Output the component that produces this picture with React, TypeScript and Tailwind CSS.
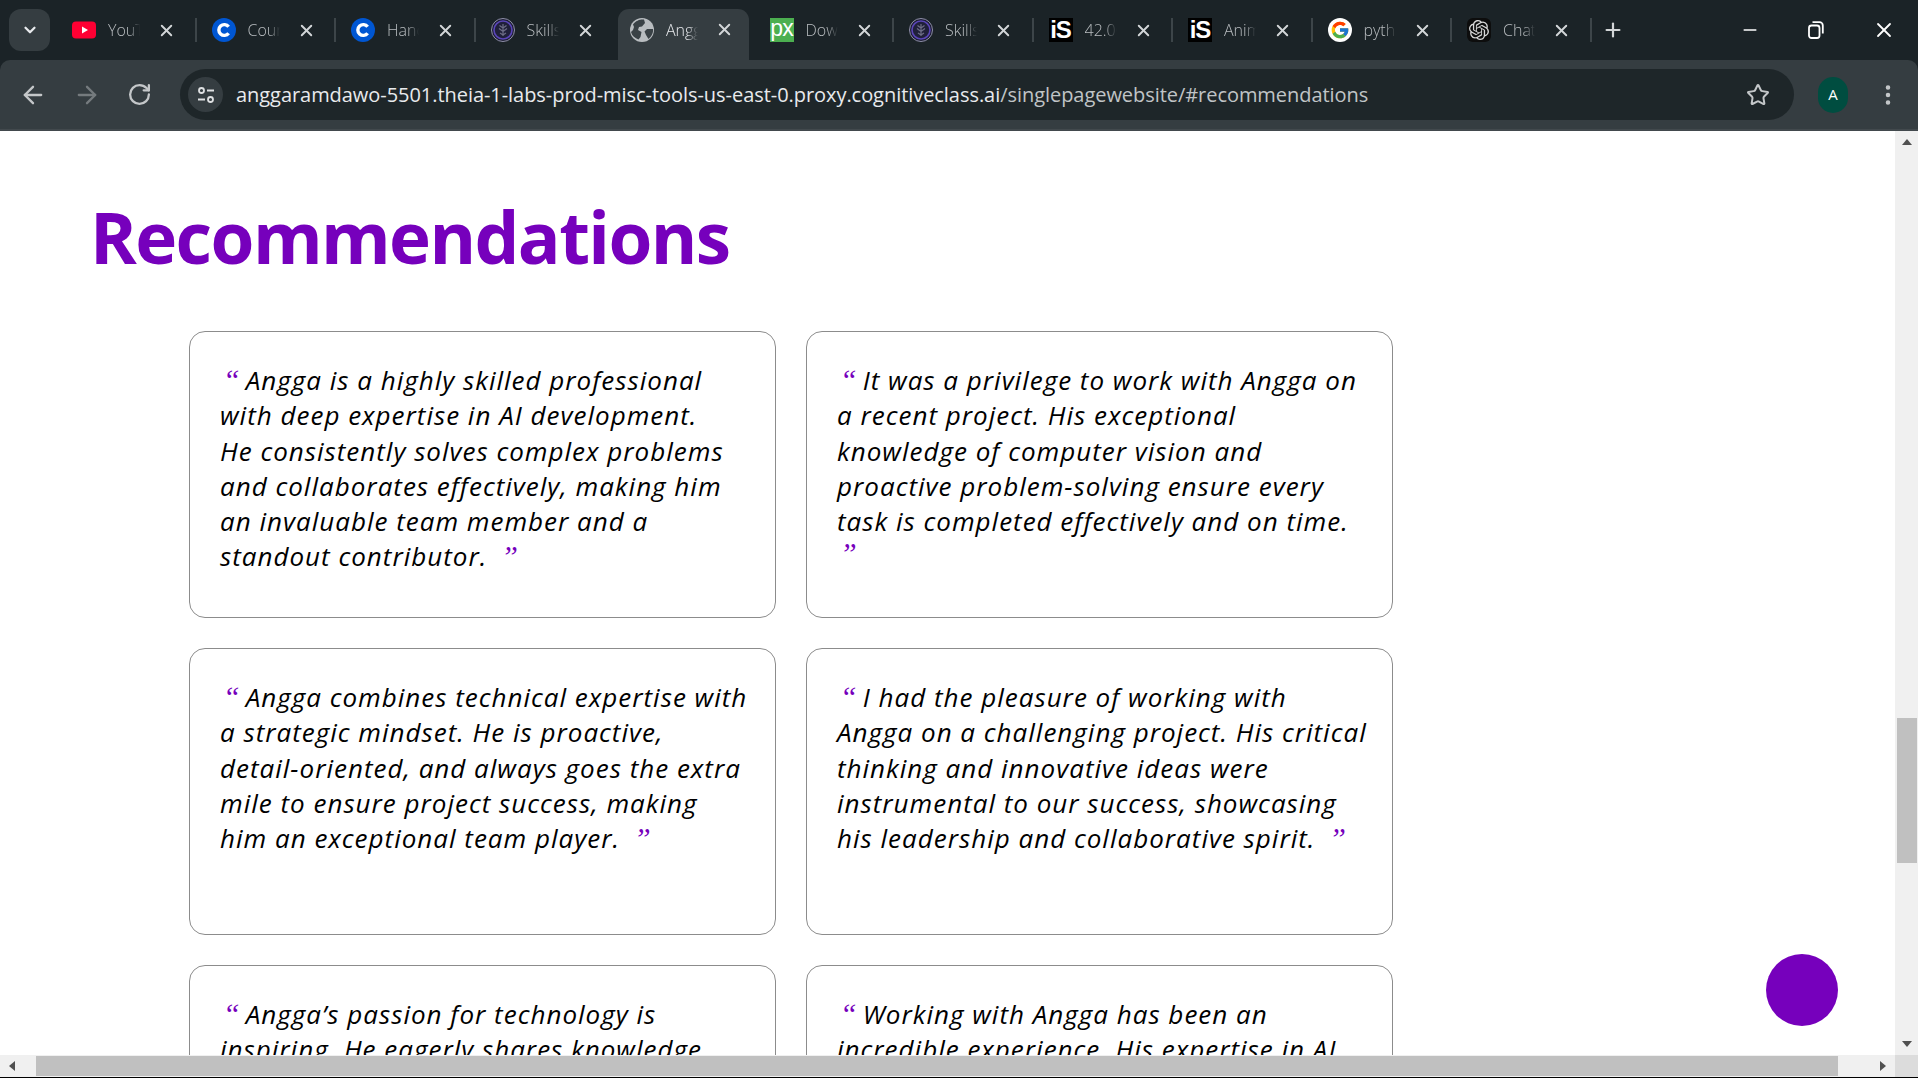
import { ArrowLeft, ArrowRight, ChevronDown, Minus, MoreVertical, Plus, RotateCw, Star, X } from 'lucide-react'
import { FcGoogle } from 'react-icons/fc'
import { SiOpenai } from 'react-icons/si'

const YouTubeIcon = () => (
  <svg width="24" height="24" viewBox="0 0 24 24">
    <rect x="0" y="3.500" width="24" height="17" rx="4" fill="#ff0033" />
    <path d="M10 8.500 L16 12 L10 15.500 Z" fill="#fff" />
  </svg>
)

const CourseraIcon = () => (
  <svg width="24" height="24" viewBox="0 0 24 24">
    <circle cx="12" cy="12" r="12" fill="#0056d2" />
    <path d="M16.600 15.200 A5.400 5.400 0 1 1 16.600 8.800" fill="none" stroke="#fff" strokeWidth="3.400" />
  </svg>
)

const SkillsIcon = () => (
  <svg width="24" height="24" viewBox="0 0 24 24">
    <circle cx="12" cy="12" r="11.500" fill="#1d1d33" stroke="#8f8fa8" strokeWidth="1" />
    <circle cx="12" cy="12" r="9" fill="#20203a" stroke="#5a45b8" strokeWidth="1.600" />
    <path d="M12 6v12M12 10L8.500 7.500M12 10l3.500-2.500M12 13.500l-4-3M12 13.500l4-3M12 17l-3-2M12 17l3-2" fill="none" stroke="#6d6d86" strokeWidth="1.200" />
  </svg>
)

const GlobeIcon = () => (
  <svg width="24" height="24" viewBox="0 0 24 24">
    <circle cx="12" cy="12" r="12" fill="#b9bdc0" />
    <path d="M3 6.500C6 2 11 1 14 1.500L15 5l-3 3.500-3 .5-1 3 3.500 2-1 5-2 2.500C5 20 2 18 1 14l2-2 1-3zM17 11h6c.5 4-1.500 7.500-4.500 10L16 17l-1.500-3.500z" fill="#3a4246" />
  </svg>
)

const PxIcon = () => (
  <div className="w-6 h-6 bg-[#4caf50] text-white flex items-center justify-center text-[23px] pb-[3px] leading-none font-['Liberation_Sans',sans-serif] tracking-[-1px]">
    px
  </div>
)

const IsIcon = () => (
  <div className="w-6 h-6 bg-black text-white flex items-center justify-center text-[24px] leading-none font-bold font-['Liberation_Sans',sans-serif] tracking-[-1px]">
    iS
  </div>
)

const GoogleIcon = () => (
  <div className="w-6 h-6 rounded-full bg-white flex items-center justify-center">
    <FcGoogle size={20} />
  </div>
)

const ChatIcon = () => (
  <div className="w-6 h-6 rounded-md bg-[#0d0d0d] text-[#d8d8d8] flex items-center justify-center">
    <SiOpenai size={20} />
  </div>
)

const RestoreIcon = () => (
  <svg width="16" height="18" viewBox="0 0 16 18" fill="none" stroke="#fff" strokeWidth="1.800">
    <rect x="1" y="4.500" width="10.500" height="12.500" rx="2.500" />
    <path d="M4.500 1.200h7a3.300 3.300 0 0 1 3.300 3.300v8" />
  </svg>
)

const tabs = [
  { icon: <YouTubeIcon />, title: 'YouTube' },
  { icon: <CourseraIcon />, title: 'Coursera' },
  { icon: <CourseraIcon />, title: 'Hands-on' },
  { icon: <SkillsIcon />, title: 'Skills' },
  { icon: <GlobeIcon />, title: 'Angga', active: true },
  { icon: <PxIcon />, title: 'Download' },
  { icon: <SkillsIcon />, title: 'Skills' },
  { icon: <IsIcon />, title: '42.000' },
  { icon: <IsIcon />, title: 'Animate' },
  { icon: <GoogleIcon />, title: 'python' },
  { icon: <ChatIcon />, title: 'ChatGPT' },
]

const cards = [
  {
    lines: [
      'Angga is a highly skilled professional',
      'with deep expertise in AI development.',
      'He consistently solves complex problems',
      'and collaborates effectively, making him',
      'an invaluable team member and a',
      'standout contributor.',
    ],
  },
  {
    lines: [
      'It was a privilege to work with Angga on',
      'a recent project. His exceptional',
      'knowledge of computer vision and',
      'proactive problem-solving ensure every',
      'task is completed effectively and on time.',
    ],
    closeOnNewLine: true,
  },
  {
    lines: [
      'Angga combines technical expertise with',
      'a strategic mindset. He is proactive,',
      'detail-oriented, and always goes the extra',
      'mile to ensure project success, making',
      'him an exceptional team player.',
    ],
  },
  {
    lines: [
      'I had the pleasure of working with',
      'Angga on a challenging project. His critical',
      'thinking and innovative ideas were',
      'instrumental to our success, showcasing',
      'his leadership and collaborative spirit.',
    ],
  },
  {
    lines: [
      'Angga’s passion for technology is',
      'inspiring. He eagerly shares knowledge',
      'and helps the team grow with every',
      'project he works on.',
    ],
  },
  {
    lines: [
      'Working with Angga has been an',
      'incredible experience. His expertise in AI',
      'and his dedication to quality make him',
      'a valued colleague.',
    ],
  },
]

const Quote = ({ mark, className }: { mark: string; className: string }) => (
  <span className={`font-['Liberation_Serif',serif] text-[#7600bc] text-[30px] leading-none tracking-normal ${className}`}>{mark}</span>
)

function Tab({ icon, title, active }: { icon: React.ReactNode; title: string; active?: boolean }) {
  return (
    <div
      className={`h-[51px] shrink-0 flex items-center pl-3 relative ${
        active
          ? 'w-[131px] mr-[8.5px] bg-[#353d41] rounded-t-[11px] self-end pb-[10px] text-[#e8eaed]'
          : 'w-[139.5px] text-[#b9bdc0]'
      }`}
    >
      <div className="w-6 h-6 shrink-0 flex items-center justify-center">{icon}</div>
      <div className="ml-3 w-[32px] overflow-hidden whitespace-nowrap text-[16px] font-light [mask-image:linear-gradient(to_right,black_65%,transparent)]">
        {title}
      </div>
      <X size={19} strokeWidth={2.4} className="ml-[17px] text-[#d3d6d8] shrink-0" />
    </div>
  )
}

function TabStrip() {
  return (
    <div className="h-[60px] flex items-end relative">
      <div className="w-[41px] h-[42px] ml-[9px] mb-[9px] rounded-xl bg-[#353d41] flex items-center justify-center text-[#e8eaed] shrink-0">
        <ChevronDown size={18} strokeWidth={3} />
      </div>
      <div className="ml-[10px] flex items-end h-full">
        {tabs.map((t, i) => (
          <div key={i} className="flex items-center h-full">
            <Tab {...t} />
            {i < tabs.length - 1 && i !== 3 && i !== 4 && (
              <div className="w-0 h-[24px] relative">
                <div className="absolute -left-[5px] top-0 w-[2px] h-[24px] bg-[#3d4549]" />
              </div>
            )}
          </div>
        ))}
        <div className="h-full flex items-center">
          <div className="w-[2px] h-[24px] bg-[#3d4549] mr-[17px] -ml-[5px]" />
          <Plus size={22} strokeWidth={2.4} className="text-[#d3d6d8] -ml-[7px]" />
        </div>
      </div>
      <div className="ml-auto h-full flex items-center pr-[22px] gap-[48px] text-white">
        <Minus size={20} strokeWidth={1.800} />
        <RestoreIcon />
        <X size={24} strokeWidth={1.800} />
      </div>
    </div>
  )
}

function Toolbar() {
  return (
    <div className="h-[71px] bg-[#353d41] rounded-t-[10px] border-b-2 border-[#42494d] flex items-center">
      <div className="flex items-center pl-[19px] gap-[26px] w-[180px] text-[#c4c7c9]">
        <ArrowLeft size={28} strokeWidth={2} />
        <ArrowRight size={28} strokeWidth={2} className="text-[#757b7e]" />
        <RotateCw size={25} strokeWidth={2.200} />
      </div>
      <div className="w-[1614px] h-[51px] rounded-full bg-[#1e2629] flex items-center pl-2 pr-[24px]">
        <div className="w-[35px] h-[35px] rounded-full bg-[#353d41] flex items-center justify-center shrink-0">
          <svg width="18" height="18" viewBox="0 0 18 18" fill="none" stroke="#dfe1e3" strokeWidth="1.800">
            <circle cx="4.500" cy="4.500" r="2.500" />
            <path d="M10 4.500h7M1 13.500h7" />
            <circle cx="13.500" cy="13.500" r="2.500" />
          </svg>
        </div>
        <div className="ml-[13px] text-[20px] whitespace-nowrap text-[#e8eaed] font-['Open_Sans',sans-serif] tracking-[-0.05px]">
          anggaramdawo-5501.theia-1-labs-prod-misc-tools-us-east-0.proxy.cognitiveclass.ai
          <span className="text-[#c0c4c6]">/singlepagewebsite/#recommendations</span>
        </div>
        <Star size={24} strokeWidth={2} className="ml-auto text-[#c4c7c9]" />
      </div>
      <div className="ml-[24px] w-[30px] h-[36px] rounded-full bg-[#004d40] text-white text-[15px] flex items-center justify-center font-['Open_Sans',sans-serif] shrink-0">
        A
      </div>
      <MoreVertical size={26} strokeWidth={2.200} className="ml-[27px] text-[#c4c7c9] shrink-0" />
    </div>
  )
}

function Card({ lines, closeOnNewLine }: { lines: string[]; closeOnNewLine?: boolean }) {
  return (
    <div className="h-[287px] border border-[#8c8c8c] rounded-[16px] pt-[31px] pl-[30px] text-[26px] tracking-[1px] leading-[35.3px] italic text-black whitespace-nowrap font-['Open_Sans',sans-serif]">
      {lines.map((line, i) => (
        <div key={i}>
          {i === 0 && <Quote mark="“" className="ml-[3px] mr-[6px]" />}
          {line}
          {i === lines.length - 1 && !closeOnNewLine && <Quote mark="”" className="ml-[14px]" />}
        </div>
      ))}
      {closeOnNewLine && (
        <div className="h-[20px] -mt-[3px]">
          <Quote mark="”" className="ml-[3px]" />
        </div>
      )}
    </div>
  )
}

function Page() {
  return (
    <div className="flex-1 min-w-0 overflow-hidden relative bg-white pl-[90px] pt-[63px]">
      <h1 className="text-[71px] tracking-[-1.6px] leading-[86px] font-bold text-[#7600bc] font-['Open_Sans',sans-serif]">Recommendations</h1>
      <div className="ml-[99px] mt-[51px] grid grid-cols-[587px_587px] gap-[30px]">
        {cards.map((c, i) => (
          <Card key={i} {...c} />
        ))}
      </div>
      <div className="absolute left-[1766px] top-[823px] w-[72px] h-[72px] rounded-full bg-[#7600bc]" />
    </div>
  )
}

function VScrollbar() {
  return (
    <div className="w-[23px] bg-[#f0f0f0] relative shrink-0">
      <svg className="absolute left-[7px] top-[8px]" width="10" height="6" viewBox="0 0 10 6"><path d="M5 0L10 6H0Z" fill="#505050" /></svg>
      <div className="absolute left-[2px] right-[1px] top-[587px] h-[145px] bg-[#c0c0c0]" />
      <svg className="absolute left-[7px] bottom-[8px]" width="10" height="6" viewBox="0 0 10 6"><path d="M5 6L10 0H0Z" fill="#505050" /></svg>
    </div>
  )
}

function HScrollbar() {
  return (
    <div className="h-[23px] bg-[#f0f0f0] border-b border-black flex items-center shrink-0">
      <div className="w-[36px] pl-[9px] shrink-0">
        <svg width="6" height="10" viewBox="0 0 6 10"><path d="M0 5L6 0V10Z" fill="#505050" /></svg>
      </div>
      <div className="w-[1802px] h-[20px] bg-[#c0c0c0]" />
      <div className="w-[57px] flex justify-end pr-[9px]">
        <svg width="6" height="10" viewBox="0 0 6 10"><path d="M6 5L0 0V10Z" fill="#505050" /></svg>
      </div>
      <div className="w-[23px] h-full bg-[#dcdcdc]" />
    </div>
  )
}

export default function App() {
  return (
    <div className="h-screen w-full overflow-hidden flex flex-col bg-white font-['Open_Sans',sans-serif]">
      <div className="bg-[#1b2327]">
        <TabStrip />
        <Toolbar />
      </div>
      <div className="flex-1 min-h-0 flex">
        <Page />
        <VScrollbar />
      </div>
      <HScrollbar />
    </div>
  )
}
